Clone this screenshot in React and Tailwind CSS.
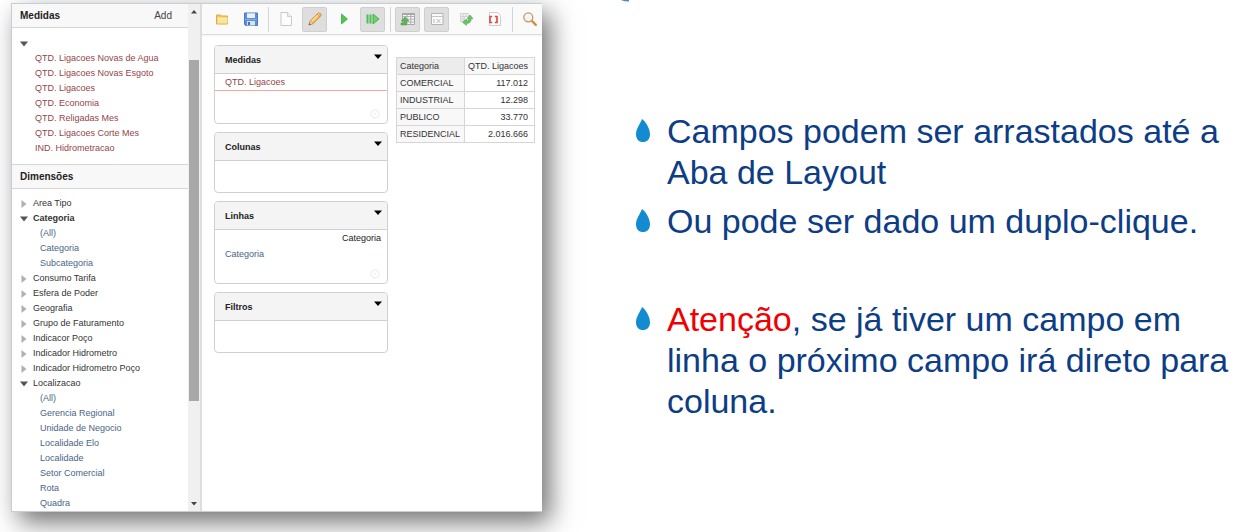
import React from "react";

const measures = [
  "QTD. Ligacoes Novas de Agua",
  "QTD. Ligacoes Novas Esgoto",
  "QTD. Ligacoes",
  "QTD. Economia",
  "QTD. Religadas Mes",
  "QTD. Ligacoes Corte Mes",
  "IND. Hidrometracao",
];

const dimensions = [
  { name: "Area Tipo" },
  { name: "Categoria", open: true, bold: true, levels: ["(All)", "Categoria", "Subcategoria"] },
  { name: "Consumo Tarifa" },
  { name: "Esfera de Poder" },
  { name: "Geografia" },
  { name: "Grupo de Faturamento" },
  { name: "Indicacor Poço" },
  { name: "Indicador Hidrometro" },
  { name: "Indicador Hidrometro Poço" },
  {
    name: "Localizacao",
    open: true,
    levels: [
      "(All)",
      "Gerencia Regional",
      "Unidade de Negocio",
      "Localidade Elo",
      "Localidade",
      "Setor Comercial",
      "Rota",
      "Quadra",
    ],
  },
];

const rows = [
  ["COMERCIAL", "117.012"],
  ["INDUSTRIAL", "12.298"],
  ["PUBLICO", "33.770"],
  ["RESIDENCIAL", "2.016.666"],
];

function Svg({ children }) {
  return (
    <svg viewBox="0 0 16 16" className="size-4" fill="none" aria-hidden="true">
      {children}
    </svg>
  );
}

const icons = {
  open: (
    <Svg>
      <path d="M2.500 4 h4 l1 1 h6 v8 h-11z" fill="#f3c860" stroke="#e0aa48" />
      <path d="M3.500 7 h10 v5.500 h-10z" fill="#fbe596" />
      <path d="M3.500 7.200 h10" stroke="#fff3c0" />
    </Svg>
  ),
  save: (
    <Svg>
      <path d="M1.500 2 h13 v12.500 h-12 l-1 -1z" fill="#5b8fdb" stroke="#4a7bcb" />
      <path d="M4 2 h8 v5 h-8z" fill="#e8f1fd" />
      <path d="M4 2.500 h8" stroke="#b9d0ef" />
      <path d="M2 8.500 h12" stroke="#86b0ea" />
      <path d="M4 10 h8 v4.500 h-8z" fill="#d9e5dc" />
      <path d="M5 11 h2 v3 h-2z" fill="#3f6fc0" />
    </Svg>
  ),
  blank: (
    <Svg>
      <path d="M3 1.500 h6.500 l4 4 v9 h-10.500z" fill="#fdfdfd" stroke="#c9c9c9" />
      <path d="M9.500 1.500 v4 h4" fill="#f0f0f0" stroke="#cfcfcf" />
    </Svg>
  ),
  edit: (
    <Svg>
      <path d="M2 14 l1.200 -4 l8 -8 q3 -.5 3 2.500 l-8 8z" fill="#f5b856" stroke="#c98a3a" strokeWidth=".9" />
      <path d="M4.500 10.500 l7.500 -7.500" stroke="#ffe3a0" strokeWidth="1.500" />
      <path d="M10 3 l3 3" stroke="#e98f55" />
      <path d="M3.200 10 l3 2.500 l-4.200 1.500z" fill="#f6dfc0" stroke="#b98550" strokeWidth=".6" />
      <path d="M2 14 l.6 -2 l1.400 1.300z" fill="#5d4630" />
    </Svg>
  ),
  run: (
    <Svg>
      <path d="M5.500 3 l6 5 l-6 5z" fill="#4fc552" stroke="#3cae42" strokeWidth=".8" />
    </Svg>
  ),
  auto: (
    <Svg>
      <path d="M2.500 3.500 v9 M5.500 3.500 v9" stroke="#4fbf52" strokeWidth="2" />
      <path d="M8 3 l6 5 l-6 5z" fill="#6fd06e" stroke="#3cae42" strokeWidth=".9" />
    </Svg>
  ),
  parent: (
    <Svg>
      <path d="M2.500 2.500 h12 v11 h-12z" fill="#f7f7f7" stroke="#a7a7a7" />
      <path d="M2.500 5.500 h12 M2.500 8.200 h12 M2.500 11 h12 M7 2.500 v11 M10.800 2.500 v11" stroke="#b0b0b0" />
      <path d="M2.500 2 h12 v2 h-12z" fill="#a7a7a7" />
      <path d="M5 6 l4 4 h-2.500 v4 h-5.500 v-2 h2.800 v-2 h-2.500z" fill="#5cb55c" stroke="#3f9440" strokeWidth=".5" />
    </Svg>
  ),
  empty: (
    <Svg>
      <path d="M2.500 2.500 h11.500 v11 h-11.500z" fill="#fafafa" stroke="#b4b4b4" />
      <path d="M3 5.500 h11" stroke="#c4c4c4" />
      <path d="M5 8 v4 M7.500 8 l4 4 M11.500 8 l-4 4" stroke="#b9b9b9" />
    </Svg>
  ),
  swap: (
    <Svg>
      <path d="M2.500 2.500 h8 v3 h-4 v5 h-4z" fill="#f2f2f2" stroke="#cccccc" strokeWidth=".8" />
      <path d="M5 2.500 v8 M8 2.500 v3 M2.500 5.500 h4 M2.500 8 h4" stroke="#cccccc" strokeWidth=".8" />
      <path d="M12 4 l3 3.700 h-1.800 q0 4.800 -4.700 4.800 v2 l-4 -3.200 l4 -3.300 v2 q2.300 0 2.300 -2.300 h-1.800z" fill="#6cc06c" stroke="#45a048" strokeWidth=".5" />
    </Svg>
  ),
  mdx: (
    <Svg>
      <path d="M2.500 1.500 h8 l3 3 v10 h-11z" fill="#fdfdfd" stroke="#cdcdcd" />
      <path d="M5.200 5.500 h-2.200 v6 h2.200 M7.800 5.500 h2.200 v6 h-2.200" stroke="#e04a4a" strokeWidth="1.700" />
    </Svg>
  ),
  zoom: (
    <Svg>
      <path d="M9.500 9.500 l4.300 4.300" stroke="#cf9040" strokeWidth="2.400" strokeLinecap="round" />
      <circle cx="6.300" cy="6.300" r="4.500" fill="#f1f4f6" stroke="#c79a5c" strokeWidth="1.300" />
      <path d="M4 6 q.5 -2 2.500 -2.200" stroke="#fff" />
    </Svg>
  ),
};

const toolbar = [
  ["open", "Abrir"],
  ["save", "Salvar"],
  null,
  ["blank", "Nova consulta"],
  ["edit", "Editar", true],
  ["run", "Executar"],
  ["auto", "Execução automática", true],
  null,
  ["parent", "Ocultar pais", true],
  ["empty", "Não vazio", true],
  ["swap", "Trocar eixos"],
  ["mdx", "Mostrar MDX"],
  null,
  ["zoom", "Ampliar"],
];

function Toolbar() {
  return (
    <div className="flex h-[31px] items-center gap-1 overflow-hidden border-b border-[#dcdcdc] bg-[#fafafa] pl-[7px] shadow-xs">
      {toolbar.map((item, i) =>
        item ? (
          <button
            key={i}
            type="button"
            aria-label={item[1]}
            className={
              "flex size-[25px] shrink-0 items-center justify-center rounded-xs border " +
              (item[2] ? "border-[#cfcfcf] bg-[#dedede]" : "border-transparent")
            }
          >
            {icons[item[0]]}
          </button>
        ) : (
          <span key={i} className="h-[25px] w-[2px] shrink-0 border-r border-[#d4d4d4]" />
        )
      )}
    </div>
  );
}

function Caret({ open }) {
  return (
    <svg viewBox="0 0 8 8" className="size-2 shrink-0" aria-hidden="true">
      {open ? <path d="M0 1.500 h8 l-4 5z" fill="#555" /> : <path d="M1.500 0 l5 4 l-5 4z" fill="#b0b0b0" />}
    </svg>
  );
}

function SideHeader({ title, children }) {
  return (
    <div className="flex h-6 items-center justify-between border-b border-[#d6d6d6] bg-[#f8f8f8] pr-4 pl-2 text-[10px]">
      <h2 className="font-bold text-[#222]">{title}</h2>
      {children}
    </div>
  );
}

function Sidebar() {
  return (
    <aside className="flex w-[190px] shrink-0 border-r-2 border-[#dedede]">
      <div className="min-w-0 flex-1 text-[9px] leading-[15px]">
        <SideHeader title="Medidas">
          <button type="button" className="text-[#444]">Add</button>
        </SideHeader>
        <div className="pt-2 pb-2">
          <button type="button" aria-label="Recolher medidas" className="flex h-[15px] items-center pl-2">
            <Caret open />
          </button>
          <ul>
            {measures.map((m) => (
              <li key={m} className="pl-[23px]">
                <a href="#" className="block text-[#94454a]">{m}</a>
              </li>
            ))}
          </ul>
        </div>
        <div className="border-t border-[#d6d6d6]">
          <SideHeader title="Dimensões" />
        </div>
        <ul className="pt-[7px]">
          {dimensions.map((d) => (
            <li key={d.name}>
              <button
                type="button"
                className={"flex items-center gap-[5px] pl-2 text-[#333] " + (d.bold ? "font-bold" : "")}
              >
                <Caret open={d.open} />
                {d.name}
              </button>
              {d.levels && (
                <ul>
                  {d.levels.map((l) => (
                    <li key={l} className="pl-7">
                      <a href="#" className="block text-[#4a6585]">{l}</a>
                    </li>
                  ))}
                </ul>
              )}
            </li>
          ))}
        </ul>
      </div>
      <div className="flex w-3 flex-col items-center bg-[#f0f0f0]">
        <svg viewBox="0 0 12 16" className="h-4 w-3" aria-hidden="true">
          <path d="M3 9.500 h6 l-3 -3.500z" fill="#444" />
        </svg>
        <div className="flex w-[10px] flex-1 flex-col">
          <div className="grow-[40]" />
          <div className="grow-[342] bg-[#a8a8a8]" />
          <div className="grow-[94]" />
        </div>
        <svg viewBox="0 0 12 16" className="h-4 w-3" aria-hidden="true">
          <path d="M3 7 h6 l-3 3.500z" fill="#444" />
        </svg>
      </div>
    </aside>
  );
}

function Clear() {
  return (
    <button type="button" aria-label="Limpar" className="flex self-end">
      <svg viewBox="0 0 12 12" className="size-3" fill="none" stroke="#f3f3f1" aria-hidden="true">
        <circle cx="6" cy="6" r="4" strokeWidth="2" />
        <path d="M4.500 4.500 l3 3 M7.500 4.500 l-3 3" />
      </svg>
    </button>
  );
}

function Axis({ title, children }) {
  return (
    <section className="overflow-hidden rounded border border-[#d0d0d0] bg-white">
      <header className="flex h-7 justify-between border-b border-[#d0d0d0] bg-[#f4f4f4] pr-[5px] pl-[10px]">
        <h3 className="self-center font-bold text-[#222]">{title}</h3>
        <button type="button" aria-label={"Opções de " + title} className="flex pt-2">
          <svg viewBox="0 0 8 6" className="h-[6px] w-2" aria-hidden="true">
            <path d="M0 0.500 h8 l-4 4.500z" fill="#000" />
          </svg>
        </button>
      </header>
      {children}
    </section>
  );
}

function Workspace() {
  return (
    <div className="min-w-0 flex-1">
      <Toolbar />
      <div className="flex gap-2 pt-[10px] pl-3">
        <div className="flex w-[174px] shrink-0 flex-col gap-2 text-[9px] leading-4">
          <Axis title="Medidas">
            <div className="border-b border-red-300 pl-[10px]">
              <a href="#" className="block text-[#94454a]">QTD. Ligacoes</a>
            </div>
            <div className="flex h-8 flex-col justify-end pr-[6px] pb-[3px]"><Clear /></div>
          </Axis>
          <Axis title="Colunas">
            <div className="h-[31px]" />
          </Axis>
          <Axis title="Linhas">
            <div className="flex flex-col pr-[6px] pb-[3px] pl-[10px]">
              <span className="self-end text-[#222]">Categoria</span>
              <a href="#" className="self-start text-[#4a6585]">Categoria</a>
              <div className="flex h-[18px] flex-col justify-end"><Clear /></div>
            </div>
          </Axis>
          <Axis title="Filtros">
            <div className="h-[31px]" />
          </Axis>
        </div>
        <div className="pt-3">
          <table className="border-collapse text-[9px] leading-4 text-[#333]">
            <thead>
              <tr>
                <th className="w-[68px] border border-[#d6d6d6] bg-[#ececec] px-[3px] text-left font-normal">Categoria</th>
                <th className="w-[70px] border border-[#d6d6d6] bg-[#f8f8f8] pr-[6px] pl-[3px] text-left font-normal whitespace-nowrap">QTD. Ligacoes</th>
              </tr>
            </thead>
            <tbody>
              {rows.map(([name, value]) => (
                <tr key={name}>
                  <th className="border border-[#d6d6d6] bg-[#f8f8f8] px-[3px] text-left font-normal">{name}</th>
                  <td className="border border-[#d6d6d6] bg-white pr-[6px] text-right">{value}</td>
                </tr>
              ))}
            </tbody>
          </table>
        </div>
      </div>
    </div>
  );
}

function Bullet({ children }) {
  return (
    <li className="flex gap-[17px]">
      <svg viewBox="0 0 14 23" className="mt-2 h-[23px] w-[14px] shrink-0" aria-hidden="true">
        <path d="M6 0 C9 2 14 9 14 15 C14 20.500 11 23 7 23 C3 23 0 20.500 0 15 C0 10 4 5 6 0z" fill="#128bd0" />
      </svg>
      <p>{children}</p>
    </li>
  );
}

export default function App() {
  return (
    <main className="relative grid min-h-screen grid-cols-[minmax(542px,542fr)_minmax(0,712fr)] items-start overflow-hidden bg-white font-['Liberation_Sans',Arial,sans-serif]">
      <div className="pt-[3px] pb-5 pl-[11px]">
        <div className="flex border-t border-b border-l border-[#c3ced6] bg-white shadow-[8px_10px_24px_rgba(0,0,0,0.56)]">
          <Sidebar />
          <Workspace />
        </div>
      </div>
      <svg viewBox="0 0 8 2" className="absolute top-0 left-[621px] h-[2px] w-2" aria-hidden="true">
        <path d="M0 0 h8 v1.500 q-5 0 -8 -1.500z" fill="#4a8cc8" />
      </svg>
      <ul className="flex flex-col gap-2 pt-[111px] pr-5 pl-[94px] text-[34px] leading-[41px] text-[#0d3d85]">
        <Bullet>Campos podem ser arrastados até a Aba de Layout</Bullet>
        <Bullet>Ou pode ser dado um duplo-clique.</Bullet>
        <li aria-hidden="true" className="h-[41px]" />
        <Bullet>
          <span className="text-[#f00000]">Atenção</span>, se já tiver um campo em linha o próximo campo irá direto para coluna.
        </Bullet>
      </ul>
    </main>
  );
}
